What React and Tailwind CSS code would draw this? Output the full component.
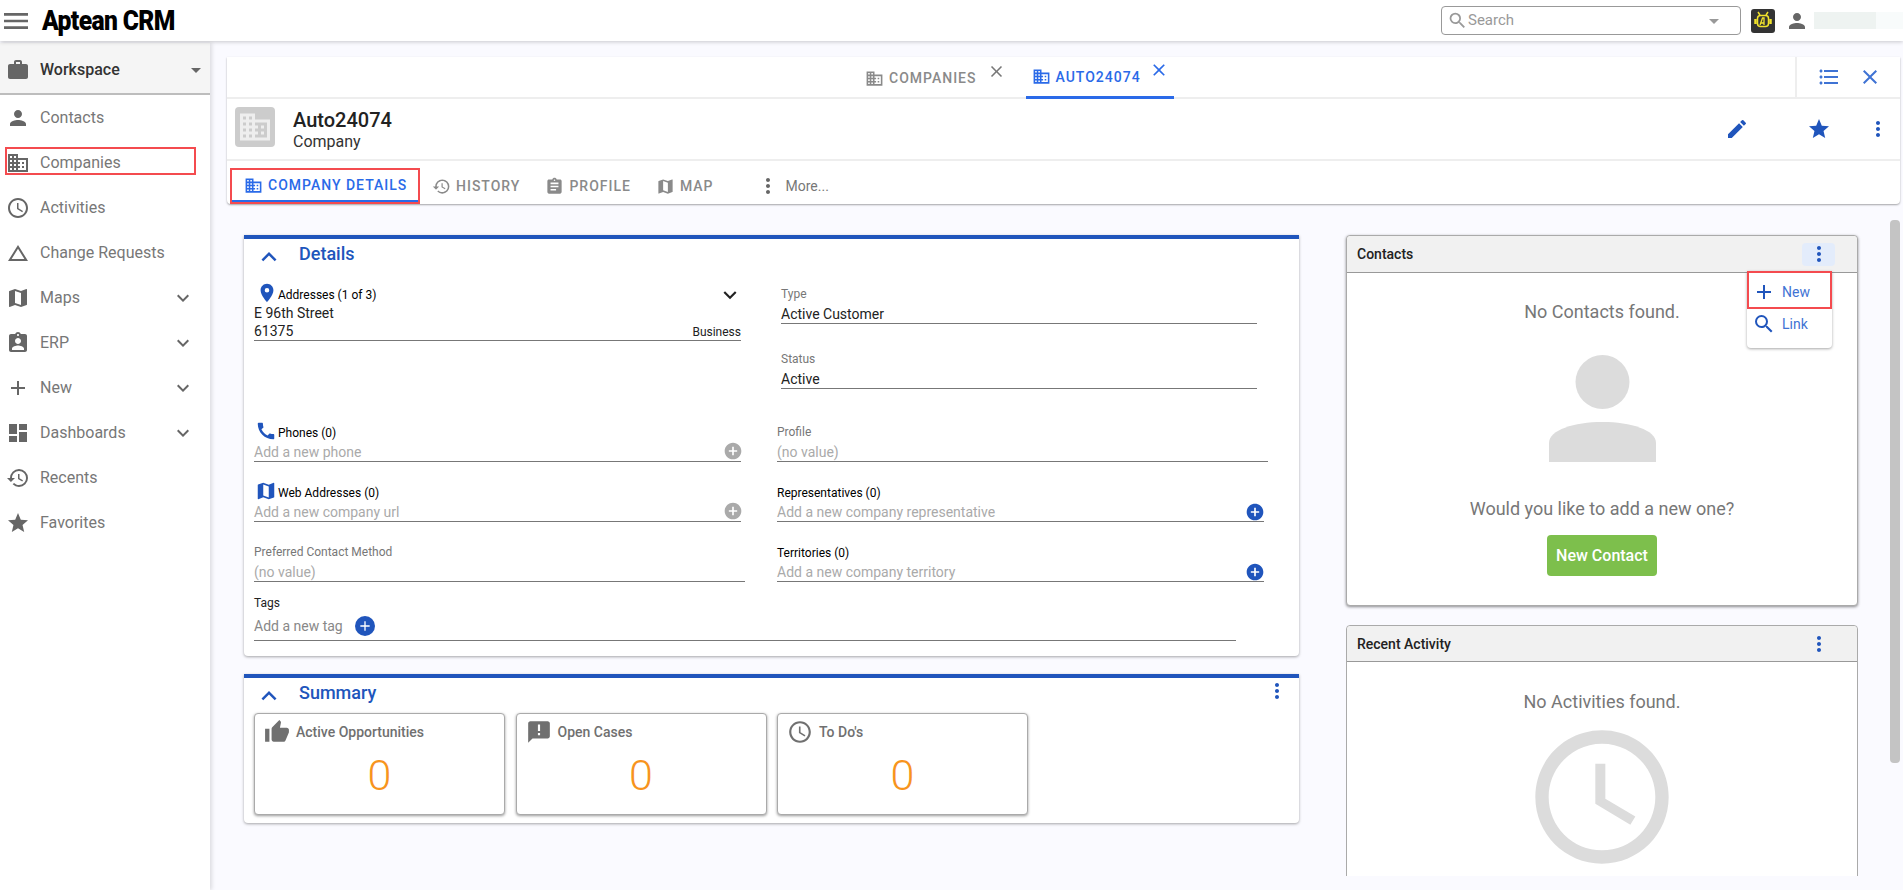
import {
  MdMenu, MdSearch, MdArrowDropDown, MdPerson, MdWork, MdDomain, MdAccessTime, MdChangeHistory, MdMap,
  MdAssignmentInd, MdAdd, MdDashboard, MdHistory, MdStar, MdExpandMore, MdExpandLess, MdMoreVert, MdClose,
  MdFormatListBulleted, MdEdit, MdAssignment, MdPlace, MdCall, MdAddCircle, MdThumbUp, MdAnnouncement,
} from 'react-icons/md'

const navItems = [
  { icon: MdPerson, label: 'Contacts' },
  { icon: MdDomain, label: 'Companies', boxed: true },
  { icon: MdAccessTime, label: 'Activities' },
  { icon: MdChangeHistory, label: 'Change Requests' },
  { icon: MdMap, label: 'Maps', more: true },
  { icon: MdAssignmentInd, label: 'ERP', more: true },
  { icon: MdAdd, label: 'New', more: true },
  { icon: MdDashboard, label: 'Dashboards', more: true },
  { icon: MdHistory, label: 'Recents' },
  { icon: MdStar, label: 'Favorites' },
]

function AiBadge() {
  return (
    <svg width="24" height="24" viewBox="0 0 24 24" className="mr-[10px]">
      <rect width="24" height="24" rx="3" fill="#333" />
      <path d="M7 3l2 3M17 3l-2 3" stroke="#f2e32c" strokeWidth="1.5" />
      <rect x="6.500" y="6.500" width="11" height="11" rx="3" fill="none" stroke="#f2e32c" strokeWidth="1.500" />
      <path d="M4.500 10v5M19.500 10v5" stroke="#f2e32c" strokeWidth="2.500" />
      <path d="M9 16l2.500-7h1.500v7M10 14h3" fill="none" stroke="#f2e32c" strokeWidth="1.300" />
    </svg>
  )
}

function TopBar() {
  return (
    <header className="relative z-20 flex h-[41px] shrink-0 items-center bg-white shadow-[0_1px_4px_rgba(0,0,0,0.2)]">
      <MdMenu size={32} className="shrink-0 text-[#666]" />
      <div className="ml-[10px] w-[130px] origin-left scale-x-[0.88] whitespace-nowrap text-[28px] font-black leading-none tracking-tight text-black">
        Aptean CRM
      </div>
      <div className="ml-auto flex items-center">
        <div className="mr-[10px] flex h-[29px] w-[300px] items-center rounded border border-[#999] pl-[6px] pr-[14px]">
          <MdSearch size={21} className="-ml-[1px] text-[#999]" />
          <span className="text-[15px] text-[#999]">Search</span>
          <MdArrowDropDown size={24} className="ml-auto text-[#999]" />
        </div>
        <AiBadge />
        <MdPerson size={24} className="text-[#666]" />
        <div className="ml-[5px] flex h-[17px] w-[89px]">
          <div className="w-[62px] bg-[#eef3f1]" />
          <div className="flex-1 bg-[#f8fbfb]" />
        </div>
      </div>
    </header>
  )
}

function SideNav() {
  return (
    <aside className="z-10 mt-[2px] w-[210px] shrink-0 bg-white shadow-[2px_0_4px_rgba(0,0,0,0.12)]">
      <div className="flex h-[52px] items-center border-b-2 border-[#bdbdbd] bg-[#f5f5f5] pl-[6px] pr-[2px] pt-[3px]">
        <MdWork size={24} className="text-[#666]" />
        <span className="ml-[10px] text-base font-medium text-[#333]">Workspace</span>
        <MdArrowDropDown size={24} className="ml-auto text-[#666]" />
      </div>
      <nav>
        {navItems.map(({ icon: Icon, label, boxed, more }) => (
          <div key={label} className="relative flex h-[45px] items-center pl-[6px] pr-[15px]">
            {boxed && <div className="absolute left-[5px] top-[7px] h-[28px] w-[191px] border-2 border-[#f44b4f]" />}
            <Icon size={24} className="text-[#666]" />
            <span className="ml-[10px] text-base text-[#777]">{label}</span>
            {more && <MdExpandMore size={24} className="ml-auto text-[#666]" />}
          </div>
        ))}
      </nav>
    </aside>
  )
}

function TabItem({ icon: Icon, label, active }) {
  return (
    <div className={`flex h-full items-center font-medium tracking-[1px] ${active ? 'text-[#2a6ae8]' : 'text-[#8a8a8a]'}`}>
      <Icon size={19} className="mr-[5px] shrink-0" />
      <span className="text-sm">{label}</span>
    </div>
  )
}

function RecordPanel() {
  return (
    <section className="shrink-0 rounded-b bg-white shadow-[0_1px_2px_rgba(0,0,0,0.35)]">
      <div className="flex h-[42px] items-stretch border-b-2 border-[#eee]">
        <div className="ml-[638px] flex items-center pt-[2px]">
          <TabItem icon={MdDomain} label="COMPANIES" />
          <MdClose size={19} className="-mt-[14px] ml-[10px] text-[#777]" />
        </div>
        <div className="-mb-[2px] ml-[20px] flex w-[148px] items-center border-b-[3px] border-[#2a6ae8] pl-[6px]">
          <TabItem icon={MdDomain} label="AUTO24074" active />
          <MdClose size={20} className="-mt-[14px] ml-[8px] text-[#2a6ae8]" />
        </div>
        <div className="ml-auto flex w-[105px] items-center border-l-2 border-[#eee] pl-[20px]">
          <MdFormatListBulleted size={24} className="text-[#3f73d4]" />
          <MdClose size={24} className="ml-[17px] text-[#3f73d4]" />
        </div>
      </div>
      <div className="flex h-[62px] items-center border-b-2 border-[#eee] pl-[8px] pr-[10px]">
        <div className="-mt-[5px] flex h-[40px] w-[40px] items-center justify-center rounded bg-[#ccc]">
          <MdDomain size={36} className="text-[#eee]" />
        </div>
        <div className="ml-[18px]">
          <div className="text-xl font-medium leading-[24px] text-[#222]">Auto24074</div>
          <div className="text-base leading-[19px] text-[#333]">Company</div>
        </div>
        <MdEdit size={24} className="ml-auto text-[#2055bc]" />
        <MdStar size={24} className="ml-[58px] text-[#2055bc]" />
        <MdMoreVert size={24} className="ml-[35px] text-[#2055bc]" />
      </div>
      <div className="flex h-[43px] items-stretch pl-[3px] pt-[7px]">
        <div className="w-[190px] border-2 border-[#f44b4f]">
          <div className="flex h-full items-center border-b-2 border-[#2a6ae8] pl-[12px]">
            <TabItem icon={MdDomain} label="COMPANY DETAILS" active />
          </div>
        </div>
        <div className="ml-[12px] flex items-center"><TabItem icon={MdHistory} label="HISTORY" /></div>
        <div className="ml-[25px] flex items-center"><TabItem icon={MdAssignment} label="PROFILE" /></div>
        <div className="ml-[25px] flex items-center"><TabItem icon={MdMap} label="MAP" /></div>
        <div className="ml-[42px] flex items-center text-[#666]">
          <MdMoreVert size={24} />
          <span className="ml-[6px] text-sm text-[#777]">More...</span>
        </div>
      </div>
    </section>
  )
}

function Field({ label, value, dark, icon: Icon, action, muted = true, labelTop = 'top-[3px]', className = '' }) {
  return (
    <div className={`relative h-[40px] border-b border-[#777] ${className}`}>
      {Icon && <Icon size={22} className="absolute left-[1px] top-[-2px] text-[#2055bc]" />}
      <div className={`absolute text-xs leading-[16px] ${labelTop} ${Icon ? 'left-[24px]' : 'left-0'} ${dark ? 'text-black' : 'text-[#777]'}`}>{label}</div>
      <div className={`absolute left-0 top-[22px] text-sm leading-[17px] ${muted ? 'text-[#aaa]' : 'text-[#222]'}`}>{value}</div>
      {action === 'gray' && <MdAddCircle size={20} className="absolute right-[-2px] top-[19px] text-[#aaa]" />}
      {action === 'blue' && <MdAddCircle size={20} className="absolute right-[-1px] top-[20px] text-[#2055bc]" />}
    </div>
  )
}

function SectionCard({ title, children, className, menu }) {
  return (
    <div className={`rounded-b border-t-4 border-[#2055bc] bg-white shadow-[0_1px_3px_rgba(0,0,0,0.35)] ${className}`}>
      <div className="relative flex h-[30px] items-center">
        <MdExpandLess size={30} className="ml-[10px] mt-[5px] text-[#2055bc]" />
        <span className="ml-[15px] text-lg font-medium text-[#2055bc]">{title}</span>
        {menu && <MdMoreVert size={24} className="-mt-[5px] ml-auto mr-[10px] text-[#2055bc]" />}
      </div>
      {children}
    </div>
  )
}

function DetailsCard() {
  return (
    <SectionCard title="Details" className="h-[421px]">
      <div className="flex pl-[10px]">
        <div className="w-[491px]">
          <div className="relative h-[72px] pt-[18px]">
            <MdPlace size={22} className="absolute left-[2px] top-[13px] text-[#2055bc]" />
            <div className="pl-[24px] text-xs leading-[16px] text-black">Addresses (1 of 3)</div>
            <MdExpandMore size={26} className="absolute left-[463px] top-[13px] text-[#222]" />
            <div className="absolute bottom-0 left-0 h-[37px] w-[487px] border-b border-[#777]">
              <div className="text-sm leading-[18px] text-[#222]">E 96th Street</div>
              <div className="text-sm leading-[18px] text-[#222]">61375</div>
              <span className="absolute bottom-0 right-0 text-xs leading-[15px] text-[#222]">Business</span>
            </div>
          </div>
          <Field className="mt-[81px] w-[487px]" icon={MdCall} dark label="Phones (0)" value="Add a new phone" action="gray" />
          <Field className="mt-[20px] w-[487px]" icon={MdMap} dark label="Web Addresses (0)" value="Add a new company url" action="gray" />
          <Field className="mt-[20px]" labelTop="top-[2px]" label="Preferred Contact Method" value="(no value)" />
        </div>
        <div className="ml-[32px] w-[491px]">
          <div className="ml-[4px] w-[476px]">
            <Field className="mt-[15px]" labelTop="top-[2px]" label="Type" value="Active Customer" muted={false} />
            <Field className="mt-[25px]" labelTop="top-[2px]" label="Status" value="Active" muted={false} />
          </div>
          <Field className="mt-[33px]" labelTop="top-[2px]" label="Profile" value="(no value)" />
          <Field className="mt-[20px] mr-[4px]" dark label="Representatives (0)" value="Add a new company representative" action="blue" />
          <Field className="mt-[20px] mr-[4px]" dark label="Territories (0)" value="Add a new company territory" action="blue" />
        </div>
      </div>
      <div className="relative ml-[10px] mt-[13px] h-[46px] w-[982px] border-b border-[#777]">
        <div className="text-xs leading-[16px] text-[#222]">Tags</div>
        <div className="mt-[5px] flex items-center">
          <span className="text-sm text-[#888]">Add a new tag</span>
          <div className="ml-[12px] flex h-[20px] w-[20px] items-center justify-center rounded-full bg-[#2055bc]">
            <MdAdd size={16} className="text-white" />
          </div>
        </div>
      </div>
    </SectionCard>
  )
}

function Tile({ icon: Icon, label }) {
  return (
    <div className="h-[102px] w-[251px] rounded border border-[#aaa] bg-white shadow-[0_1px_3px_rgba(0,0,0,0.4)]">
      <div className="flex h-[36px] items-center pl-[9px]">
        <Icon size={26} className="text-[#707070]" />
        <span className="ml-[6px] text-sm font-medium text-[#707070]">{label}</span>
      </div>
      <div className="text-center text-[43px] font-light leading-[50px] text-[#f7941d]">0</div>
    </div>
  )
}

function SummaryCard() {
  return (
    <SectionCard title="Summary" menu className="mt-[18px] h-[149px]">
      <div className="flex gap-[10.5px] pl-[10px] pt-[5px]">
        <Tile icon={MdThumbUp} label="Active Opportunities" />
        <Tile icon={MdAnnouncement} label="Open Cases" />
        <Tile icon={MdAccessTime} label="To Do's" />
      </div>
    </SectionCard>
  )
}

function PanelHeader({ title, height, active }) {
  return (
    <div className={`flex items-center justify-between rounded-t border-b border-[#999] bg-[#f1f1f1] pl-[10px] pr-[22px] ${height}`}>
      <span className="text-sm font-medium text-[#222]">{title}</span>
      <div className={`flex h-[23px] w-[33px] items-center justify-center rounded ${active ? 'bg-[#e3ecfb]' : ''}`}>
        <MdMoreVert size={24} className="text-[#2055bc]" />
      </div>
    </div>
  )
}

function ContactsPanel() {
  return (
    <div className="relative h-[371px] rounded border border-[#aaa] bg-white shadow-[0_1px_3px_rgba(0,0,0,0.45)]">
      <PanelHeader title="Contacts" height="h-[37px]" active />
      <div className="flex flex-col items-center pt-[29px]">
        <div className="text-lg leading-[20px] text-[#777]">No Contacts found.</div>
        <svg width="107" height="107" viewBox="0 0 107 107" className="mt-[33px]">
          <ellipse cx="53.500" cy="27" rx="27" ry="27" fill="#dcdcdc" />
          <path d="M0 107V88C0 75 25 67 53.500 67S107 75 107 88V107Z" fill="#dcdcdc" />
        </svg>
        <div className="mt-[36px] text-lg leading-[22px] text-[#777]">Would you like to add a new one?</div>
        <div className="mt-[15px] flex h-[41px] w-[110px] items-center justify-center rounded-sm bg-[#7dbf4c] text-base font-medium text-white">
          New Contact
        </div>
      </div>
      {/* open row menu */}
      <div className="absolute left-[400px] top-[35px] w-[85px] rounded-b bg-white text-sm text-[#3f73d4] shadow-[0_1px_3px_rgba(0,0,0,0.35)]">
        <div className="flex h-[38px] items-center border-2 border-[#f44b4f] pl-[3px] pt-[4px]">
          <MdAdd size={24} className="text-[#2055bc]" />
          <span className="ml-[6px]">New</span>
        </div>
        <div className="flex h-[39px] items-center pb-[10px] pl-[5px]">
          <MdSearch size={24} className="text-[#2055bc]" />
          <span className="ml-[6px]">Link</span>
        </div>
      </div>
    </div>
  )
}

function ActivityPanel() {
  return (
    <div className="mt-[19px] h-[300px] rounded-t border border-[#aaa] bg-white">
      <PanelHeader title="Recent Activity" height="h-[36px]" />
      <div className="flex flex-col items-center pt-[30px]">
        <div className="text-lg leading-[20px] text-[#777]">No Activities found.</div>
        <MdAccessTime size={160} className="mt-[5px] text-[#dcdcdc]" />
      </div>
    </div>
  )
}

export default function App() {
  return (
    <div className="flex h-[890px] w-[1903px] flex-col overflow-hidden bg-[#fafaff] font-['Roboto',sans-serif]">
      <TopBar />
      <div className="flex min-h-0 flex-1">
        <SideNav />
        <main className="flex min-w-0 flex-1 flex-col pl-[17px] pr-[3px] pt-[16px]">
          <RecordPanel />
          <div className="flex h-[672px] shrink-0 overflow-hidden">
            <div className="ml-[17px] mt-[31px] w-[1055px] shrink-0">
              <DetailsCard />
              <SummaryCard />
            </div>
            <div className="ml-[47px] mt-[31px] w-[512px] shrink-0 pb-[2px]">
              <ContactsPanel />
              <ActivityPanel />
            </div>
            <div className="ml-[32px] mt-[16px] h-[543px] w-[10px] shrink-0 rounded bg-[#c4c4c4]" />
          </div>
        </main>
      </div>
    </div>
  )
}
